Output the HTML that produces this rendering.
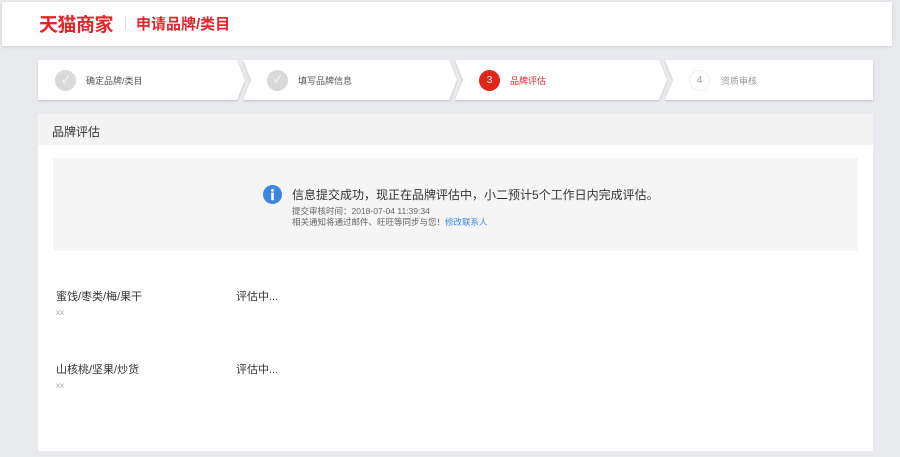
<!DOCTYPE html>
<html><head><meta charset="utf-8"><style>
*{margin:0;padding:0;box-sizing:border-box}
body{width:900px;height:457px;background:#e9eaee;font-family:"Liberation Sans","Noto Sans CJK SC",sans-serif;position:relative;overflow:hidden}
.hdr{position:absolute;left:2px;top:2px;width:890px;height:44px;background:#fff;box-shadow:0 1px 3px rgba(0,0,0,.12)}
.logo{position:absolute;left:37px;top:8px;font-size:19px;color:#e5242b;letter-spacing:-0.5px;font-weight:bold}
.sep{position:absolute;left:123px;top:14px;width:1px;height:14px;background:#ddd}
.ttl{position:absolute;left:134px;top:11px;font-size:15px;font-weight:bold;color:#e5242b}
.step{position:absolute;top:60px;height:40px;filter:drop-shadow(0 1px 1px rgba(0,0,0,.18))}
.bg{position:absolute;left:0;top:0;width:100%;height:100%;background:#fff}
.c{position:absolute;top:10px;width:21px;height:21px;border-radius:50%;font-size:10px;text-align:center;line-height:21px}
.lb{position:absolute;top:14px;font-size:9px;color:#555}
.panelh{position:absolute;left:38px;top:114px;width:835px;height:31px;background:#f3f3f3;font-size:12px;color:#333;padding:9px 0 0 14px}
.panel{position:absolute;left:38px;top:145px;width:835px;height:306px;background:#fff}
.info{position:absolute;left:15px;top:13px;width:805px;height:93px;background:#f5f5f6}
.row{position:absolute;font-size:11px;color:#333}
.xx{position:absolute;font-size:8px;color:#aaa}
</style></head><body>
<div class="hdr"><div class="logo">天猫商家</div><div class="sep"></div><div class="ttl">申请品牌/类目</div></div>

<div class="step" style="left:38px;width:207px"><div class="bg" style="clip-path:polygon(0 0,199px 0,207px 20px,199px 40px,0 40px)"></div>
<div class="c" style="left:17px;background:#d9d9d9;color:#fff">✓</div><div class="lb" style="left:48px">确定品牌/类目</div></div>
<div class="step" style="left:243px;width:214px"><div class="bg" style="clip-path:polygon(0 0,206px 0,214px 20px,206px 40px,0 40px,8px 20px)"></div>
<div class="c" style="left:24px;background:#d9d9d9;color:#fff">✓</div><div class="lb" style="left:55px">填写品牌信息</div></div>
<div class="step" style="left:455px;width:212px"><div class="bg" style="clip-path:polygon(0 0,204px 0,212px 20px,204px 40px,0 40px,8px 20px)"></div>
<div class="c" style="left:24px;background:#e1251b;color:#fff">3</div><div class="lb" style="left:55px;color:#e5242b">品牌评估</div></div>
<div class="step" style="left:665px;width:208px"><div class="bg" style="clip-path:polygon(0 0,208px 0,208px 40px,0 40px,8px 20px)"></div>
<div class="c" style="left:24px;border:1px solid #eee;color:#999;line-height:19px">4</div><div class="lb" style="left:56px;color:#999">资质审核</div></div>

<div class="panelh">品牌评估</div>
<div class="panel">
<div class="info">
<svg style="position:absolute;left:210px;top:27px" width="19" height="19" viewBox="0 0 20 20"><circle cx="10" cy="10" r="10" fill="#3d86e0"/><circle cx="10" cy="5.5" r="1.5" fill="#fff"/><rect x="8.6" y="8" width="2.8" height="8" rx="0.6" fill="#fff"/></svg>
<div style="position:absolute;left:239px;top:28px;font-size:12px;color:#333">信息提交成功，现正在品牌评估中，小二预计5个工作日内完成评估。</div>
<div style="position:absolute;left:239px;top:47px;font-size:8.5px;color:#666">提交审核时间：2018-07-04 11:39:34</div>
<div style="position:absolute;left:239px;top:58px;font-size:8.5px;color:#666">相关通知将通过邮件、旺旺等同步与您！<span style="color:#3d86e0">修改联系人</span></div>
</div>
<div class="row" style="left:18px;top:143px">蜜饯/枣类/梅/果干</div><div class="xx" style="left:18px;top:163px">xx</div>
<div class="row" style="left:198px;top:143px">评估中...</div>
<div class="row" style="left:18px;top:216px">山核桃/坚果/炒货</div><div class="xx" style="left:18px;top:236px">xx</div>
<div class="row" style="left:198px;top:216px">评估中...</div>
</div>
</body></html>
